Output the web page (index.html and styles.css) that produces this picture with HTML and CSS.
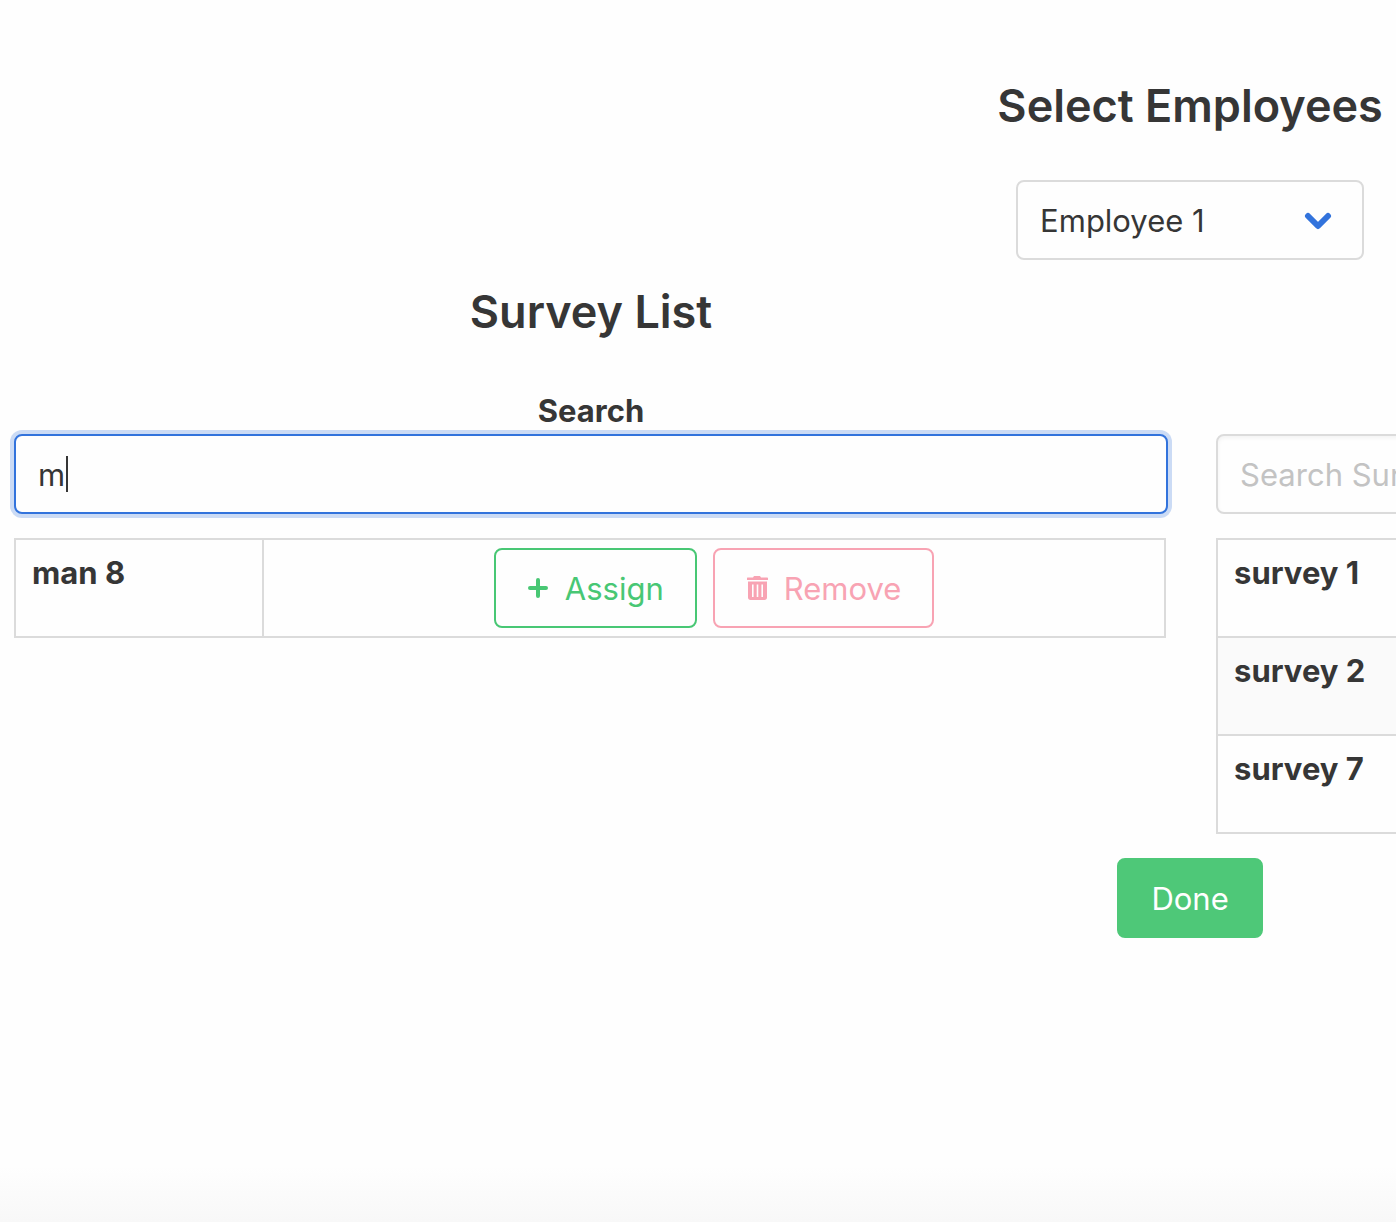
FILE: index.html
```html
<!DOCTYPE html>
<html lang="en">
<head>
<meta charset="utf-8">
<meta name="viewport" content="width=device-width, initial-scale=1">
<title>Select Employees</title>
<link rel="stylesheet" href="styles.css">
</head>
<body>
<main class="workspace">
  <section class="employees">
    <h1 class="title"><label for="employee">Select Employees</label></h1>
    <div class="select">
      <select id="employee" class="select-field">
        <option>Employee 1</option>
      </select>
      <svg class="select-arrow" viewBox="0 0 28 20" aria-hidden="true"><path d="M4 4l10 10L24 4"/></svg>
    </div>
  </section>

  <div class="columns">
    <section class="column">
      <h2 class="title">Survey List</h2>
      <label class="label" for="survey-search">Search</label>
      <div class="control">
        <input class="input is-focused" id="survey-search" type="text" value="m">
        <span class="caret"></span>
      </div>
      <table class="table">
        <tbody>
          <tr>
            <th class="name" scope="row">man 8</th>
            <td>
              <div class="buttons">
                <button class="button assign" type="button">
                  <svg class="icon" viewBox="0 0 48 48" aria-hidden="true"><path d="M24 16v16M16 24h16" fill="none" stroke="currentColor" stroke-width="4" stroke-linecap="round"/></svg>
                  Assign
                </button>
                <button class="button remove" type="button">
                  <svg class="icon" viewBox="0 0 48 48" aria-hidden="true"><path fill="currentColor" fill-rule="evenodd" d="M14.500 13.500h5.500l1-1.500h6l1 1.500h6c.6 0 1 .4 1 .8V16H14v-1.700c0-.4.200-.8.500-.8zM15 17.500h19v16c0 1.600-1 2.500-2.500 2.500h-14c-1.500 0-2.500-.9-2.500-2.500zM19 20.500V33h1.600V20.500zM23.700 20.500V33h1.600V20.500zM28.400 20.500V33H30V20.500z"/></svg>
                  Remove
                </button>
              </div>
            </td>
          </tr>
        </tbody>
      </table>
    </section>

    <section class="column assigned">
      <input class="input" type="text" placeholder="Search Survey" aria-label="Search Survey">
      <table class="table striped">
        <tbody>
          <tr><th class="name" scope="row">survey 1</th><td></td></tr>
          <tr><th class="name" scope="row">survey 2</th><td></td></tr>
          <tr><th class="name" scope="row">survey 7</th><td></td></tr>
        </tbody>
      </table>
    </section>
  </div>

  <button class="button done" type="button">Done</button>
</main>
<footer class="fade"></footer>
</body>
</html>
```
FILE: styles.css
```css
* {
  box-sizing: border-box;
}

body {
  display: flex;
  flex-direction: column;
  min-height: 100vh;
  margin: 0;
  overflow: hidden;
  background: #fefefe;
  color: #363636;
  font: 400 31px/48px Inter, "Liberation Sans", sans-serif;
}

/* The workspace runs past the right edge of the window */
.workspace {
  display: flex;
  flex-direction: column;
  align-items: center;
  width: calc(170% + 7px);
  padding: 78px 14px 0;
}

.employees {
  display: flex;
  flex-direction: column;
  align-items: center;
  gap: 46px;
}

.title {
  margin: 0;
  font-size: 45px;
  font-weight: 600;
  line-height: 56px;
  text-align: center;
}

.select {
  position: relative;
  width: 348px;
}

.select-field {
  width: 100%;
  height: 80px;
  padding: 2px 80px 0 22px;
  border: 2px solid #dbdbdb;
  border-radius: 8px;
  background: #fefefe;
  color: inherit;
  font: inherit;
  appearance: none;
}

.select-arrow {
  position: absolute;
  top: 32px;
  right: 32px;
  width: 28px;
  height: 20px;
  fill: none;
  stroke: #3273dc;
  stroke-width: 6;
  stroke-linecap: round;
  stroke-linejoin: round;
  pointer-events: none;
}

.columns {
  display: grid;
  grid-template-columns: calc(50% - 22px) 1fr;
  gap: 48px;
  align-self: stretch;
  margin: 24px 0;
}

.column {
  display: flex;
  flex-direction: column;
}

.assigned {
  padding-top: 150px;
}

.label {
  margin: 46px auto 0;
  padding-top: 1px;
  font-weight: 700;
  line-height: 47px;
}

.control {
  position: relative;
}

.input {
  display: block;
  width: 100%;
  height: 80px;
  padding: 0 22px;
  border: 2px solid #dbdbdb;
  border-radius: 8px;
  outline: 0;
  background: #fefefe;
  box-shadow: inset 0 2px 4px rgba(10, 10, 10, 0.05);
  color: inherit;
  font: inherit;
}

.input::placeholder {
  color: #c3c3c3;
}

.is-focused {
  border-color: #3273dc;
  box-shadow: 0 0 0 4px rgba(50, 115, 220, 0.25);
}

.caret {
  position: absolute;
  top: 22px;
  left: 52px;
  width: 2px;
  height: 36px;
  background: #363636;
}

.table {
  width: calc(100% - 2px);
  margin-top: 24px;
  border-collapse: collapse;
}

.table th,
.table td {
  height: 98px;
  padding: 8px 16px;
  border: 2px solid #dbdbdb;
  text-align: left;
  vertical-align: top;
}

.table .name {
  width: 248px;
  padding-top: 9px;
  font-weight: 700;
}

.striped tr:nth-child(even) {
  background: #fafafa;
}

.buttons {
  display: flex;
  justify-content: center;
  gap: 16px;
}

.button {
  display: flex;
  align-items: center;
  gap: 3px;
  height: 80px;
  padding: 2px 31px 0 18px;
  border: 2px solid currentColor;
  border-radius: 8px;
  background: #fefefe;
  font: inherit;
}

.icon {
  width: 48px;
  height: 48px;
  margin-top: -2px;
}

.assign {
  color: #48c774;
}

.remove {
  color: #f8a3b3;
}

.done {
  padding: 2px 32px 0;
  border-color: #4ec878;
  background: #4ec878;
  color: #fff;
}

.fade {
  height: 56px;
  margin-top: auto;
  background: linear-gradient(#fefefe, #f8f8f8);
}
```
